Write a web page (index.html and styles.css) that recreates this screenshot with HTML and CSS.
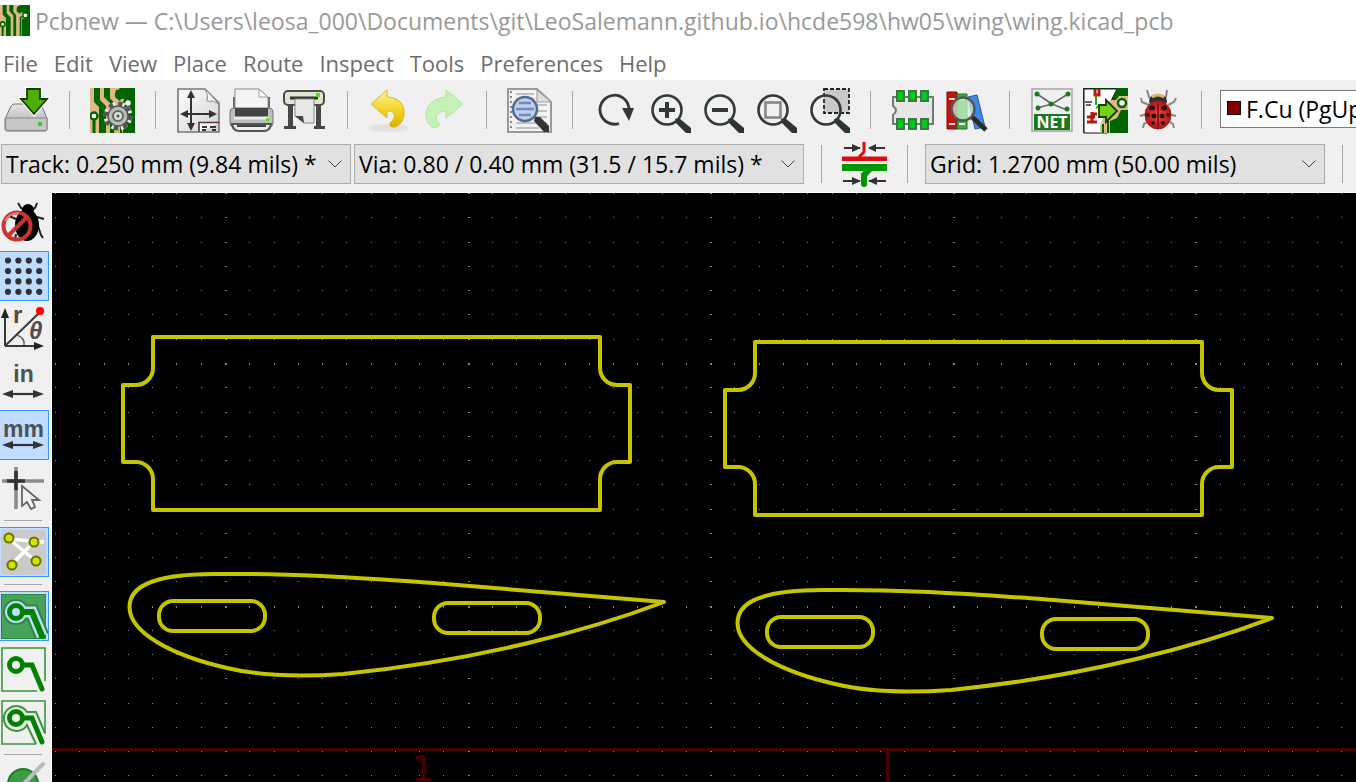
FILE: index.html
```html
<!DOCTYPE html>
<html lang="en">
<head>
<meta charset="utf-8">
<title>Pcbnew</title>
<link rel="stylesheet" href="styles.css">
</head>
<body>
<svg width="0" height="0" class="defs" aria-hidden="true">
  <defs>
    <linearGradient id="paper" x1="0" y1="0" x2="1" y2="1"><stop offset="0" stop-color="#fdfdfd"/><stop offset="1" stop-color="#d4d4d4"/></linearGradient>
    <linearGradient id="metal" x1="0" y1="0" x2="0" y2="1"><stop offset="0" stop-color="#e4e4e4"/><stop offset="1" stop-color="#a8a8a8"/></linearGradient>
    <linearGradient id="gold" x1="0" y1="0" x2="0" y2="1"><stop offset="0" stop-color="#fff0a0"/><stop offset="0.5" stop-color="#f3d72c"/><stop offset="1" stop-color="#d9b400"/></linearGradient>
    <radialGradient id="shell"><stop offset="0" stop-color="#f04444"/><stop offset="1" stop-color="#b81414"/></radialGradient>
    <symbol id="lens" viewBox="0 0 45 45">
      <path d="M29 31L33 30L45 40V45H40L30 35Z" fill="#2e3436"/>
      <circle cx="21" cy="22" r="14.5" fill="none" stroke="#333839" stroke-width="2.6"/>
    </symbol>
    <symbol id="board" viewBox="0 0 45 45">
      <rect width="45" height="45" fill="#006400"/>
      <path d="M0 0H4V14L9 19V45H0ZM10 0H14V9L20 15V45H16V18L10 12ZM20 0H30L25 5V9L32 15V45H24V17L20 11Z" fill="#deb887"/>
      <path d="M7 0V11L12 17V45M17 0V9L23 15V45M30 45V18L34 15M27 2V7L33 12H45" fill="none" stroke="#006400" stroke-width="2.4"/>
      <path d="M31 11H39V20H33V45H29V15Z" fill="#deb887"/>
      <path d="M31 45V18L36 15" fill="none" stroke="#006400" stroke-width="2"/>
      <circle cx="38" cy="15" r="4" fill="#fff" stroke="#006400" stroke-width="2.4"/>
      <circle cx="4" cy="28" r="3.5" fill="#fff" stroke="#006400" stroke-width="2.4"/>
      <path d="M4 32V45" stroke="#006400" stroke-width="3"/>
    </symbol>
  </defs>
</svg>

<header class="titlebar">
  <svg class="logo" viewBox="0 0 45 45" preserveAspectRatio="none" aria-hidden="true"><use href="#board"/></svg>
  <h1 class="title">Pcbnew — C:\Users\leosa_000\Documents\git\LeoSalemann.github.io\hcde598\hw05\wing\wing.kicad_pcb</h1>
</header>

<nav class="menubar" aria-label="Main menu">
  <button>File</button><button>Edit</button><button>View</button><button>Place</button><button>Route</button><button>Inspect</button><button>Tools</button><button>Preferences</button><button>Help</button>
</nav>

<div class="toolbar main-tools" role="toolbar" aria-label="Main tools">
  <button class="tool" aria-label="Save">
    <svg viewBox="0 0 45 45"><path d="M7 18Q8 16 11 16H34Q37 16 38 18L43 31V41Q43 43 41 43H4Q1 43 1 41V31Z" fill="url(#metal)" stroke="#777"/><path d="M1.500 30H43V41Q43 42.500 41 42.500H4Q1.500 42.500 1.500 41Z" fill="#c6c6c6" stroke="#888"/><rect x="34" y="34" width="4" height="4" fill="#2fd02f"/><path d="M23 1H36V11H43L30 26L17 11H23Z" fill="#55b000" stroke="#fff" stroke-width="4"/><path d="M23 1H36V11H43L30 26L17 11H23Z" fill="#4fae06" stroke="#163c00" stroke-width="1.800"/></svg>
  </button>
  <i class="sep"></i>
  <button class="tool" aria-label="Board setup">
    <svg viewBox="0 0 45 45"><use href="#board"/><g transform="translate(28 28)"><circle r="11" fill="none" stroke="#eee" stroke-width="7" stroke-dasharray="6 2.600"/><circle r="11.500" fill="none" stroke="#555" stroke-width="6" stroke-dasharray="4 5"/><circle r="10" fill="#bbb" stroke="#555" stroke-width="1.500"/><circle r="5" fill="#ddd" stroke="#666" stroke-width="2"/><circle r="1.500" fill="#080"/></g></svg>
  </button>
  <i class="sep"></i>
  <button class="tool" aria-label="Page settings">
    <svg viewBox="0 0 45 45"><path d="M2 1H29L43 15V44H2Z" fill="url(#paper)" stroke="#777" stroke-width="1.600"/><path d="M29 1Q33 8 31 13Q38 12 43 16Z" fill="#fff" stroke="#888"/><path d="M15 5V41M6 26H39" stroke="#333" stroke-width="2"/><path d="M15 2L19 10H11ZM15 43L19 35H11ZM4 26L12 22V30ZM41 26L33 22V30Z" fill="#333"/><path d="M23 44V34.500H43" fill="#fff" stroke="#5e2d2d" stroke-width="1.600"/><path d="M26 39H31M34 39H40M26 42H30M36 42H40" stroke="#333" stroke-width="2"/></svg>
  </button>
  <button class="tool" aria-label="Print">
    <svg viewBox="0 0 45 45"><path d="M4 9H41V24H4Z" fill="#666"/><path d="M6 1H30L39 9V22H6Z" fill="#f4f4f4" stroke="#888"/><path d="M30 1V9H39Z" fill="#fff" stroke="#999"/><rect x="1" y="20" width="43" height="19" rx="4" fill="#bdbdbd" stroke="#777"/><path d="M6 20H39V29H6Z" fill="#444"/><path d="M5 30H40" stroke="#ececec" stroke-width="3"/><rect x="37" y="30" width="3" height="3" fill="#55e022"/><path d="M3 36H42Q41 43 35 43H10Q4 43 3 36Z" fill="#eee" stroke="#555" stroke-width="2"/><path d="M8 38H37" stroke="#444" stroke-width="2"/></svg>
  </button>
  <button class="tool" aria-label="Plot">
    <svg viewBox="0 0 45 45"><path d="M6 15H11V38H14V41H2V38H6ZM34 15H39V38H43V41H32V38H34Z" fill="#45484a"/><rect x="2" y="3" width="40" height="14" rx="4" fill="#e3e3d8" stroke="#4c4d40" stroke-width="2"/><path d="M8 10H36" stroke="#333" stroke-width="3"/><rect x="34" y="5" width="4" height="4" fill="#5bdf10"/><path d="M13 11H32V35H22L13 28Z" fill="#e8e8e8" stroke="#888"/><path d="M13 28H21L22 35Z" fill="#444"/></svg>
  </button>
  <i class="sep"></i>
  <button class="tool" aria-label="Undo">
    <svg viewBox="0 0 45 45"><ellipse cx="21" cy="40" rx="20" ry="4" fill="#e2e2e2"/><path d="M3 16L19 2V9C31 9 37 17 36 27C35 35 29 40 24 39C21 38 21 36 24 33C29 28 26 22 19 23V30Z" fill="url(#gold)" stroke="#d8b820"/></svg>
  </button>
  <button class="tool" aria-label="Redo">
    <svg viewBox="0 0 45 45"><path d="M42 16L25 2V9C12 10 4 19 5 28C6 36 11 41 16 39C19 38 19 36 17 34C13 29 16 23 25 23V30Z" fill="#c6f2b8" stroke="#b0e6a0"/></svg>
  </button>
  <i class="sep"></i>
  <button class="tool" aria-label="Find">
    <svg viewBox="0 0 45 45"><path d="M1 1H30L44 14V44H1Z" fill="#f3f3f3" stroke="#999" stroke-width="2"/><path d="M30 2V14H44Z" fill="#ddd" stroke="#999"/><path d="M4 3V43" stroke="#888" stroke-width="2" stroke-dasharray="2 3"/><path d="M9 6H27M9 11H27M9 17H40M9 23H40M9 29H40M9 35H40M9 40H32" stroke="#b3b3b3" stroke-width="1.600"/><path d="M28 29L33 29L42 38V44H37L27 33Z" fill="#333"/><circle cx="18" cy="21" r="12" fill="#bdd0f1" stroke="#526c91" stroke-width="2.500"/><path d="M12 15H24M9 21H27M12 27H24" stroke="#758ab0" stroke-width="2.500"/></svg>
  </button>
  <i class="sep"></i>
  <button class="tool" aria-label="Refresh">
    <svg viewBox="0 0 45 45"><path d="M26 35.500A14.500 14.500 0 1 1 36 22" fill="none" stroke="#333839" stroke-width="2.800"/><path d="M29 20H41L36 33Z" fill="#333839"/></svg>
  </button>
  <button class="tool" aria-label="Zoom in"><svg viewBox="0 0 45 45"><use href="#lens"/><path d="M13 22H29M21 14V30" stroke="#333839" stroke-width="4"/></svg></button>
  <button class="tool" aria-label="Zoom out"><svg viewBox="0 0 45 45"><use href="#lens"/><path d="M13 22H29" stroke="#333839" stroke-width="4"/></svg></button>
  <button class="tool" aria-label="Zoom to fit"><svg viewBox="0 0 45 45"><use href="#lens"/><rect x="13.500" y="14.500" width="15" height="15" fill="none" stroke="#888" stroke-width="2.600"/></svg></button>
  <button class="tool" aria-label="Zoom to selection"><svg viewBox="0 0 45 45"><rect x="19" y="1" width="25" height="24" fill="#c9c9c9" stroke="#222" stroke-width="1.800" stroke-dasharray="4 2"/><use href="#lens"/></svg></button>
  <i class="sep"></i>
  <button class="tool" aria-label="Footprint editor">
    <svg viewBox="0 0 45 45"><path d="M2 9H42V36H2V27Q8 22 2 18Z" fill="#e6e6e6" stroke="#777" stroke-width="2"/><g fill="#00c821" stroke="#3c7840" stroke-width="2"><path d="M6 3H13V13H6ZM18 3H25V13H18ZM30 3H37V13H30ZM6 31H13V41H6ZM18 31H25V41H18ZM30 31H37V41H30Z"/></g></svg>
  </button>
  <button class="tool" aria-label="Footprint libraries">
    <svg viewBox="0 0 45 45"><path d="M3 4H13V41H3Z" fill="#cc1010" stroke="#8d0000"/><path d="M13 6H23V41H13Z" fill="#3dad43" stroke="#167516"/><path d="M24 9L33 7L41 39L31 41Z" fill="#4289e3" stroke="#1759ad"/><path d="M5 11H11M5 36H11M15 11H21M15 36H21" stroke="#eee" stroke-width="2"/><path d="M27 28L42 42" stroke="#2b2b2b" stroke-width="5"/><circle cx="19" cy="21" r="11.500" fill="#cfeecf" fill-opacity=".75" stroke="#555" stroke-width="2.500"/></svg>
  </button>
  <i class="sep"></i>
  <button class="tool" aria-label="Load netlist">
    <svg viewBox="0 0 45 45"><rect x="2" y="1" width="40" height="42" fill="#f0f0f0" stroke="#aaa" stroke-width="1.600"/><path d="M7 6L22 16L38 6M7 20L22 16L37 22" fill="none" stroke="#666" stroke-width="1.600"/><g fill="#197a1c"><circle cx="7" cy="6" r="2.500"/><circle cx="38" cy="6" r="2.500"/><circle cx="21" cy="16" r="2.500"/><circle cx="8" cy="20" r="2.500"/><circle cx="37" cy="21" r="2.500"/><rect x="4" y="26" width="36" height="16"/></g><text x="22" y="40" class="net-label">NET</text></svg>
  </button>
  <button class="tool" aria-label="Update PCB from schematic">
    <svg viewBox="0 0 45 45"><rect width="45" height="45" fill="#006400"/><path d="M1 1H34L28 13L24 45H1Z" fill="#fff" stroke="#111"/><path d="M27 12H33L36 8H45V22H38L34 30L27 33V45H17V38Z" fill="#deb887"/><path d="M20 36V45M25 33V45" stroke="#006400" stroke-width="2"/><circle cx="39" cy="15" r="4" fill="#fff" stroke="#006400" stroke-width="2.500"/><path d="M12 1V7H16V1M4 29H12M9 24V34L4 34M10 26H14M10 34H14" fill="none" stroke="#b81414" stroke-width="3"/><path d="M13 7V17M13 20L17 17" stroke="#25a800" stroke-width="2"/><path d="M2 14H9M3 17H8" stroke="#333" stroke-width="1.500"/><path d="M16 17H23V12L34 23L23 34V29H16Z" fill="#73d216" stroke="#173a00" stroke-width="1.800"/></svg>
  </button>
  <button class="tool" aria-label="Design rules check">
    <svg viewBox="0 0 45 45"><path d="M11 2L13 9L18 12M31 2L30 9L25 12M13 17L6 14L5 10M32 17L38 14L40 10M11 26L4 28M33 26L40 28M13 33L8 36L7 40M32 33L37 36L38 40" fill="none" stroke="#888" stroke-width="2"/><ellipse cx="22" cy="13" rx="9" ry="7" fill="#303030"/><path d="M16 9Q22 5 28 9" stroke="#d8be6c" stroke-width="3" fill="none"/><ellipse cx="22" cy="27" rx="13" ry="14" fill="url(#shell)" stroke="#a01b1b"/><path d="M22 15V41" stroke="#731111" stroke-width="1.500"/><g fill="#2a1010"><ellipse cx="16" cy="20" rx="3" ry="2.500"/><ellipse cx="28" cy="20" rx="3" ry="2.500"/><circle cx="12" cy="27" r="2"/><circle cx="18" cy="28" r="2.500"/><circle cx="26" cy="28" r="2.500"/><circle cx="32" cy="27" r="2"/><circle cx="17" cy="35" r="2"/><circle cx="27" cy="35" r="2"/></g></svg>
  </button>
  <i class="sep"></i>
  <div class="layer-box">
    <span class="swatch"></span>
    <select class="combo layer" aria-label="Active layer"><option>F.Cu (PgUp)</option></select>
  </div>
</div>

<div class="toolbar aux-tools" role="toolbar" aria-label="Track and grid">
  <div class="field track"><select class="combo" aria-label="Track width"><option>Track: 0.250 mm (9.84 mils) *</option></select><svg class="chevron" viewBox="0 0 14 8"><path d="M0.500 0.500L7 7L13.500 0.500"/></svg></div>
  <div class="field via"><select class="combo" aria-label="Via size"><option>Via: 0.80 / 0.40 mm (31.5 / 15.7 mils) *</option></select><svg class="chevron" viewBox="0 0 14 8"><path d="M0.500 0.500L7 7L13.500 0.500"/></svg></div>
  <i class="sep"></i>
  <button class="tool" aria-label="Automatic track width">
    <svg viewBox="0 0 45 45"><path d="M0 14.500H45V19H0Z" fill="#de0d0d"/><path d="M17 15L22 10V0" fill="none" stroke="#de0d0d" stroke-width="3"/><path d="M0 22H45V29H0Z" fill="#009600"/><path d="M28 27L22 33V42" fill="none" stroke="#009600" stroke-width="6" stroke-linecap="round"/><path d="M2 6H18M27 6H43M1 39H18M27 39H44" stroke="#333" stroke-width="1.800"/><path d="M19 6L10 2V10ZM26 6L34 2V10ZM19 39L10 35V43ZM26 39L35 35V43Z" fill="#333"/></svg>
  </button>
  <i class="sep"></i>
  <div class="field grid"><select class="combo" aria-label="Grid"><option>Grid: 1.2700 mm (50.00 mils)</option></select><svg class="chevron" viewBox="0 0 14 8"><path d="M0.500 0.500L7 7L13.500 0.500"/></svg></div>
  <i class="sep"></i>
</div>

<main class="workspace">
  <div class="side" role="toolbar" aria-label="Display options">
    <button class="opt" aria-label="Disable design rule checking"><svg viewBox="0 0 45 45"><path d="M17 2L20 7L24 9M36 2L34 7L30 9M36 16L43 18M37 25L40 34L42 37M15 18L8 15M15 33L14 40" fill="none" stroke="#222" stroke-width="2"/><ellipse cx="26" cy="24" rx="12" ry="16" fill="#000"/><circle cx="27" cy="9" r="6" fill="#000"/><circle cx="16" cy="25" r="13.500" fill="none" stroke="#c83434" stroke-width="4"/><path d="M7 35L26 16" stroke="#c83434" stroke-width="4"/><path d="M4 20Q8 12 18 12" fill="none" stroke="#e47b7b" stroke-width="2"/></svg></button>
    <button class="opt on" aria-label="Show grid" aria-pressed="true"><svg viewBox="0 0 45 45" fill="none" stroke="#2e3436" stroke-width="6.200" stroke-linecap="round" stroke-dasharray="0 10.400"><path d="M7 6.500H39M7 17H39M7 27.400H39M7 37.800H39"/></svg></button>
    <button class="opt" aria-label="Polar coordinates"><svg viewBox="0 0 45 45"><path d="M4 39V7M4 39H36M4 39L38 6" fill="none" stroke="#3a3a3a" stroke-width="2"/><path d="M4 1L8 11H0ZM43 39L33 35V43Z" fill="#222"/><path d="M16 28Q24 31 23 38" fill="none" stroke="#666" stroke-width="1.500"/><circle cx="39" cy="4" r="4" fill="#f00"/><text x="12" y="16" class="polar-r">r</text><text x="28" y="32" class="polar-t">θ</text></svg></button>
    <button class="opt" aria-label="Units in inches"><svg viewBox="0 0 45 45"><text x="22.500" y="22" class="unit">in</text><path d="M7 34H38" stroke="#333" stroke-width="2.200"/><path d="M1 34L12 30V38ZM43 34L32 30V38Z" fill="#333"/></svg></button>
    <button class="opt on" aria-label="Units in millimeters" aria-pressed="true"><svg viewBox="0 0 45 45"><text x="22.500" y="24" class="unit">mm</text><path d="M7 32H38" stroke="#333" stroke-width="2.200"/><path d="M1 32L12 28V36ZM43 32L32 28V36Z" fill="#333"/></svg></button>
    <button class="opt" aria-label="Full-window crosshair"><svg viewBox="0 0 45 45"><path d="M1 15H43M15 1V43" stroke="#8c8c8c" stroke-width="3.600"/><path d="M6 15H24M15 5V24" stroke="#333" stroke-width="3.600"/><path d="M21 20V40L26 36L30 43L34 41L31 34H38Z" fill="#f2f2f2" stroke="#666" stroke-width="1.800"/></svg></button>
    <i class="rule"></i>
    <button class="opt on" aria-label="Show ratsnest" aria-pressed="true"><svg viewBox="0 0 45 45"><rect width="45" height="45" rx="4" fill="#cacaca"/><path d="M8 9L43 12M8 9L35 31M10 35L33 12" stroke="#fff" stroke-width="3.500"/><g fill="#cfe600" stroke="#687300" stroke-width="2"><circle cx="8" cy="8" r="4.500"/><circle cx="33" cy="12" r="4.500"/><circle cx="11" cy="35" r="4.500"/><circle cx="35" cy="31" r="4.500"/></g></svg></button>
    <i class="rule"></i>
    <button class="opt on" aria-label="Show filled zones" aria-pressed="true"><svg viewBox="0 0 45 45"><rect x=".5" y=".5" width="44" height="44" fill="#48a25c" stroke="#2b8a3a"/><circle cx="15" cy="18" r="13" fill="#2b8a3a"/><path d="M15 18H31L41 42" fill="none" stroke="#2b8a3a" stroke-width="15"/><path d="M15 18H31L41 42" fill="none" stroke="#c0dcff" stroke-width="11"/><circle cx="15" cy="18" r="11" fill="#c0dcff"/><path d="M21 18H31L41 42" fill="none" stroke="#008200" stroke-width="6" stroke-linecap="round"/><circle cx="15" cy="18" r="6.500" fill="#c0dcff" stroke="#008200" stroke-width="5"/></svg></button>
    <button class="opt" aria-label="Hide filled zones"><svg viewBox="0 0 45 45"><path d="M36 44H1V1H44V34" fill="none" stroke="#3a983a" stroke-width="1.600"/><path d="M22 18H31L41 42" fill="none" stroke="#008200" stroke-width="5" stroke-linecap="round"/><circle cx="15" cy="18" r="6.500" fill="none" stroke="#008200" stroke-width="5"/></svg></button>
    <button class="opt" aria-label="Outline filled zones"><svg viewBox="0 0 45 45"><path d="M35 44H1V1H44V34" fill="none" stroke="#3a983a" stroke-width="1.600"/><path d="M44 33L35 12H26A12.500 12.500 0 1 0 26 25L35 44" fill="none" stroke="#3a983a" stroke-width="2"/><path d="M22 18H31L41 42" fill="none" stroke="#008200" stroke-width="5" stroke-linecap="round"/><circle cx="15" cy="18" r="6.500" fill="none" stroke="#008200" stroke-width="5"/></svg></button>
    <i class="rule"></i>
    <button class="opt" aria-label="Show vias in outline mode"><svg viewBox="0 0 45 45"><circle cx="22" cy="20" r="15" fill="#3c9c46" stroke="#1d7c26" stroke-width="2"/><circle cx="22" cy="24" r="6" fill="#f0f0f0"/><path d="M3 40L42 0" stroke="#bcbcbc" stroke-width="4" stroke-linecap="round"/></svg></button>
  </div>

  <div class="canvas">
    <svg id="board-view" class="board-view" role="img" aria-label="Board layout">
      <g transform="translate(-52 -193)">
        <path id="grid-dots" class="dots" d=""/>
        <path class="sheet" d="M0 749.500H4000M887.500 750V1200"/>
        <text x="411" y="781" class="sheet-label">1</text>
        <g class="edge">
          <path id="rib" d="M153 337H600V368A17 17 0 0 0 617 385H630V462H617A17 17 0 0 0 600 479V510H153V479A17 17 0 0 0 136 462H123V385H136A17 17 0 0 0 153 368Z"/>
          <use href="#rib" x="602" y="5"/>
          <g id="foil">
            <path d="M129.500 607C129.500 590 145 574 215 574C290 573 360 578 433 583L664 602C590 630 480 660 343 674C300 677 260 676 227 668C170 655 129.500 632 129.500 607Z"/>
            <rect x="159" y="601" width="106" height="30" rx="14"/>
            <rect x="434" y="603" width="106" height="30" rx="14"/>
          </g>
          <use href="#foil" x="608" y="16"/>
        </g>
      </g>
    </svg>
  </div>
</main>
<script src="grid.js"></script>
</body>
</html>
```
FILE: styles.css
```css
* { box-sizing: border-box; }

body {
  margin: 0;
  height: 100vh;
  display: flex;
  flex-direction: column;
  overflow: hidden;
  background: #f0f0f0;
  color: #000;
  font-family: "Open Sans", "Noto Sans", sans-serif;
  font-size: 23px;
}

button, select { font: inherit; color: inherit; }
.defs { position: absolute; }

.titlebar {
  flex: none;
  height: 42px;
  display: flex;
  align-items: center;
  gap: 5px;
  background: #fff;
}
.logo { flex: none; width: 30px; height: 31px; margin-bottom: 2px; }
.title {
  margin: 0;
  font-size: 23px;
  font-weight: 400;
  line-height: 32px;
  color: #999;
  white-space: nowrap;
}

.menubar {
  flex: none;
  height: 38px;
  display: flex;
  align-items: center;
  gap: 16px;
  padding: 4px 3px 0;
  background: #fff;
}
.menubar button {
  padding: 0;
  border: 0;
  background: none;
  font-size: 22px;
  line-height: 30px;
  color: #6d6d6d;
}

.toolbar {
  flex: none;
  display: flex;
  align-items: center;
  overflow: hidden;
}
.main-tools { height: 60px; }
.aux-tools { height: 52px; padding: 0 0 4px 1px; }

.tool {
  flex: none;
  width: 53px;
  height: 53px;
  padding: 4px;
  border: 0;
  background: none;
}
.tool svg, .opt svg { display: block; width: 45px; height: 45px; overflow: visible; }
.sep {
  flex: none;
  width: 33px;
  height: 38px;
  background: linear-gradient(#a8a8a8, #a8a8a8) center / 1px 100% no-repeat;
}

.combo {
  appearance: none;
  width: 100%;
  height: 40px;
  padding: 0 4px;
  border: 1px solid #adadad;
  border-radius: 0;
  background: #e1e1e1;
}
.field { position: relative; flex: none; margin-right: 3px; }
.track { width: 350px; }
.via { width: 450px; margin-right: 1px; }
.grid { width: 400px; margin: 0 1px; }
.chevron {
  position: absolute;
  right: 9px;
  top: 16px;
  width: 14px;
  height: 8px;
  fill: none;
  stroke: #444;
  pointer-events: none;
}

.layer-box { position: relative; flex: none; width: 400px; margin: 0 0 2px 2px; }
.layer { display: block; height: 38px; padding-left: 25px; background: #fff; border-color: #7a7a7a; }
.swatch {
  position: absolute;
  left: 7px;
  top: 11px;
  width: 14px;
  height: 14px;
  border: 1px solid #000;
  background: #840000;
}

.workspace { flex: 1; min-height: 0; display: flex; }
.side {
  flex: none;
  width: 51px;
  display: flex;
  flex-direction: column;
  gap: 3px;
  padding-top: 6px;
  overflow: hidden;
}
.opt {
  flex: none;
  width: 49px;
  height: 50px;
  padding: 2px 1px;
  border: 1px solid transparent;
  border-left: 0;
  background: none;
}
.opt.on { border-color: #3399ff; background: #c0dcff; }
.rule { flex: none; height: 8px; margin: 0 9px 0 4px; background: linear-gradient(#a8a8a8, #a8a8a8) center / 100% 1px no-repeat; }

.canvas {
  flex: 1;
  min-width: 0;
  border: solid #fff;
  border-width: 1px 0 0 1px;
  background: #000;
}
.board-view { display: block; width: 100%; height: 100%; }
.dots { fill: #848484; shape-rendering: crispEdges; }
.edge { fill: none; stroke: #c4c400; stroke-width: 4; stroke-linejoin: round; }
.sheet { fill: none; stroke: #480000; stroke-width: 3; }
.sheet-label { fill: #480000; font: 36px "DejaVu Sans", sans-serif; }

.net-label { fill: #fff; font: bold 16px "Open Sans", sans-serif; text-anchor: middle; }
.unit { fill: #4d5254; font: bold 23px "Liberation Sans", sans-serif; text-anchor: middle; }
.polar-r { fill: #574a4a; font: bold 24px "Liberation Sans", sans-serif; }
.polar-t { fill: #574a4a; font: italic bold 24px "Liberation Sans", sans-serif; }
```
FILE: grid.js
```js
// Grid dots, with every tenth row and column drawn heavier.
const PITCH = 24.26;
const ORIGIN = { x: 225, y: 363 };

function drawGrid() {
  let d = "";
  for (let row = -7; ORIGIN.y + row * PITCH < window.innerHeight; row++) {
    const y = Math.round(ORIGIN.y + row * PITCH);
    const h = row % 10 === 0 ? 2 : 1;
    for (let col = -7; ORIGIN.x + col * PITCH < window.innerWidth; col++) {
      const x = Math.round(ORIGIN.x + col * PITCH);
      const w = col % 10 === 0 ? 2 : 1;
      d += `M${x} ${y}h${w}v${h}h-${w}z`;
    }
  }
  document.getElementById("grid-dots").setAttribute("d", d);
}

drawGrid();
window.addEventListener("resize", drawGrid);
```
